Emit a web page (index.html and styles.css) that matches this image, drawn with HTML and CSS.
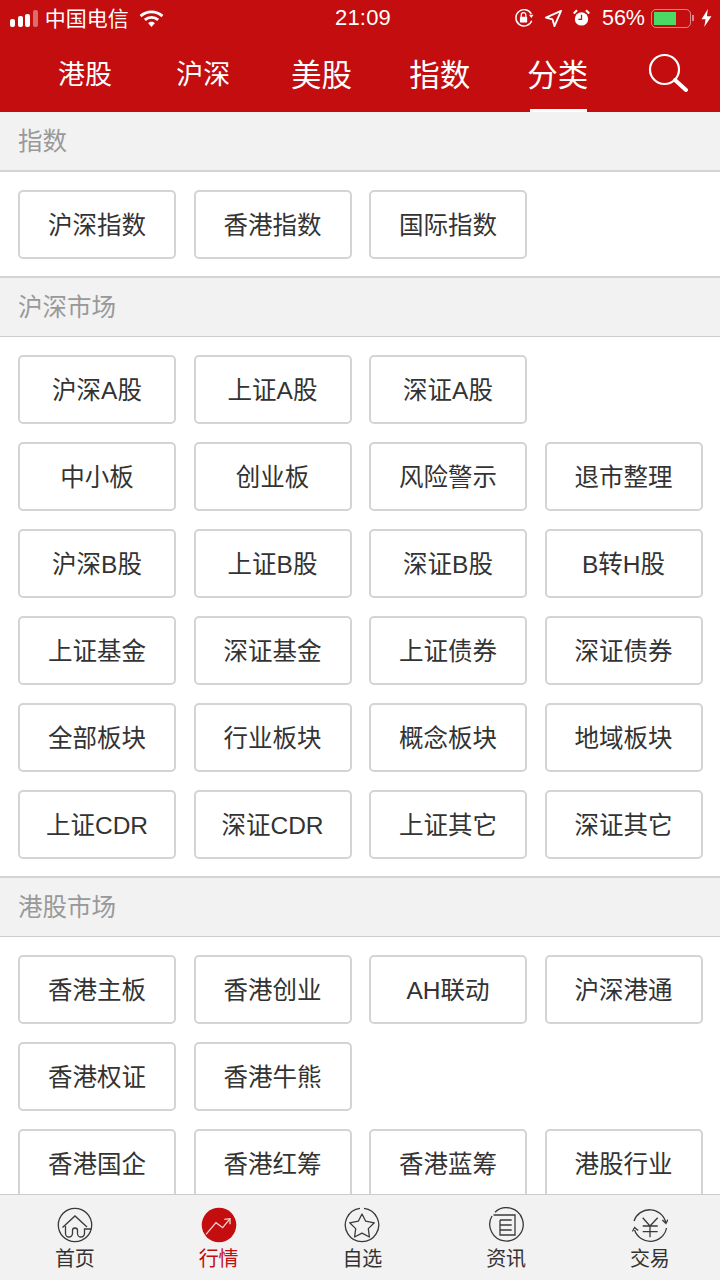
FILE: index.html
```html
<!DOCTYPE html>
<html lang="zh-CN">
<head>
    <meta charset="UTF-8">
    <meta name="viewport" content="width=device-width, initial-scale=1.0">
    <title>行情</title>
    <link rel="stylesheet" href="styles.css">
</head>
<body>
    <header class="top">
        <div class="status">
            <div class="status-left">
                <span class="signal"><i></i><i></i><i></i><i class="off"></i></span>
                <span class="carrier">中国电信</span>
                <svg class="wifi" width="25" height="19" viewBox="0 0 26 20">
                    <path d="M1.5 7.5C8 1.5 18 1.5 24.5 7.5" fill="none" stroke="#fff" stroke-width="3"/>
                    <path d="M6 11.5C10 8 16 8 20 11.5" fill="none" stroke="#fff" stroke-width="3"/>
                    <path d="M9.5 15C11.5 13 14.5 13 16.5 15L13 19Z" fill="#fff"/>
                </svg>
            </div>
            <div class="time">21:09</div>
            <div class="status-right">
                <svg width="20" height="20" viewBox="0 0 22 22">
                    <path d="M19 6.5A9 9 0 1 0 19.5 14" fill="none" stroke="#fff" stroke-width="1.6"/>
                    <path d="M16.5 7.5L21.5 7.5L19 11Z" fill="#fff"/>
                    <rect x="6.5" y="9.5" width="8" height="6.5" rx="1" fill="#fff"/>
                    <path d="M8 10V7.5a2.5 2.5 0 0 1 5 0V10" fill="none" stroke="#fff" stroke-width="1.4"/>
                </svg>
                <svg class="gap-loc" width="17" height="17" viewBox="0 0 18 18">
                    <path d="M17 1L1 8L8 10L10 17Z" fill="none" stroke="#fff" stroke-width="2" stroke-linejoin="round"/>
                </svg>
                <svg class="gap-alarm" width="17" height="18" viewBox="0 0 19 20">
                    <circle cx="9.5" cy="11" r="7.5" fill="#fff"/>
                    <path d="M9.5 6.5V11.5H6" fill="none" stroke="#c30d0f" stroke-width="1.4"/>
                    <path d="M0.8 5L4.5 1.2M18.2 5L14.5 1.2" stroke="#fff" stroke-width="2.4"/>
                </svg>
                <span class="percent">56%</span>
                <span class="battery"><i></i></span>
                <span class="battery-tip"></span>
                <svg class="bolt" width="11" height="18" viewBox="0 0 12 20">
                    <path d="M7.5 0L0.5 11.5H5L3.5 20L11.5 8H6.5Z" fill="#fff"/>
                </svg>
            </div>
        </div>
        <nav class="tabs">
            <a class="tab">港股</a>
            <a class="tab">沪深</a>
            <a class="tab large">美股</a>
            <a class="tab large">指数</a>
            <a class="tab large active">分类</a>
            <svg class="search" width="40" height="40" viewBox="0 0 40 40">
                <circle cx="16.5" cy="16.5" r="14.5" fill="none" stroke="#fff" stroke-width="2.2"/>
                <path d="M27 27L38 37" stroke="#fff" stroke-width="4" stroke-linecap="round"/>
            </svg>
        </nav>
    </header>

    <main class="content">
        <section>
            <h2>指数</h2>
            <div class="grid">
                <a class="item">沪深指数</a>
                <a class="item">香港指数</a>
                <a class="item">国际指数</a>
            </div>
        </section>
        <section>
            <h2>沪深市场</h2>
            <div class="grid">
                <a class="item">沪深A股</a>
                <a class="item">上证A股</a>
                <a class="item">深证A股</a>
                <span></span>
                <a class="item">中小板</a>
                <a class="item">创业板</a>
                <a class="item">风险警示</a>
                <a class="item">退市整理</a>
                <a class="item">沪深B股</a>
                <a class="item">上证B股</a>
                <a class="item">深证B股</a>
                <a class="item">B转H股</a>
                <a class="item">上证基金</a>
                <a class="item">深证基金</a>
                <a class="item">上证债券</a>
                <a class="item">深证债券</a>
                <a class="item">全部板块</a>
                <a class="item">行业板块</a>
                <a class="item">概念板块</a>
                <a class="item">地域板块</a>
                <a class="item">上证CDR</a>
                <a class="item">深证CDR</a>
                <a class="item">上证其它</a>
                <a class="item">深证其它</a>
            </div>
        </section>
        <section>
            <h2>港股市场</h2>
            <div class="grid">
                <a class="item">香港主板</a>
                <a class="item">香港创业</a>
                <a class="item">AH联动</a>
                <a class="item">沪深港通</a>
                <a class="item">香港权证</a>
                <a class="item">香港牛熊</a>
                <span></span>
                <span></span>
                <a class="item">香港国企</a>
                <a class="item">香港红筹</a>
                <a class="item">香港蓝筹</a>
                <a class="item">港股行业</a>
            </div>
        </section>
    </main>

    <footer class="bottom">
        <a class="bottom-item">
            <svg width="36" height="36" viewBox="0 0 36 36" fill="none" stroke="#3a3a3a" stroke-width="1.3">
                <circle cx="18" cy="18" r="16.7"/>
                <path d="M5.5 20.5L18 9L30 20"/>
                <path d="M8.5 19V26.5a3.5 3.5 0 0 0 7 0V23.5a2.5 2.5 0 0 1 5 0V26.5a3.5 3.5 0 0 0 7 0V22H34.5"/>
            </svg>
            <span>首页</span>
        </a>
        <a class="bottom-item active">
            <svg width="36" height="36" viewBox="0 0 36 36">
                <circle cx="18" cy="18" r="17.3" fill="#c30d0f"/>
                <path d="M5 27.3L15 15.7L21.7 20.7L29 11.7" fill="none" stroke="#f6d5d5" stroke-width="1.3"/>
                <path d="M23.3 12.3L29 11.7V17.3" fill="none" stroke="#f6d5d5" stroke-width="1.3"/>
            </svg>
            <span>行情</span>
        </a>
        <a class="bottom-item">
            <svg width="36" height="36" viewBox="0 0 36 36" fill="none" stroke="#3a3a3a" stroke-width="1.3">
                <path d="M20 1.4A16.7 16.7 0 1 1 16 1.4"/>
                <path d="M18 7L21.7 14.2L30.3 15.8L24.3 21.6L25.4 30L18 26.2L10.6 30L11.7 21.6L5.7 15.8L14.3 14.2Z" stroke-linejoin="round"/>
            </svg>
            <span>自选</span>
        </a>
        <a class="bottom-item">
            <svg width="36" height="36" viewBox="0 0 36 36" fill="none" stroke="#3a3a3a" stroke-width="1.3">
                <path d="M7 5.2A16.7 16.7 0 1 1 4 9"/>
                <path d="M5.5 8H27V28H12V13"/>
                <path d="M12 13H23.7M12 18H23.7M12 23H23.7"/>
            </svg>
            <span>资讯</span>
        </a>
        <a class="bottom-item">
            <svg width="36" height="36" viewBox="0 0 36 36" fill="none" stroke="#3a3a3a" stroke-width="1.3">
                <path d="M2 14A16.5 16.5 0 0 1 33.7 15.5M34.5 21A16.5 16.5 0 0 1 2.6 23"/>
                <path d="M30.3 13L33.9 16.5L36 12.5M0.4 24.5L2.6 20.5L6.2 23.5"/>
                <path d="M10.7 10.7L18 19L25.7 10.7M10.7 19H25.7M10.7 24.7H25.7M18 19V30.3"/>
            </svg>
            <span>交易</span>
        </a>
    </footer>
</body>
</html>
```

FILE: styles.css
```css
html, body {
    margin: 0;
    padding: 0;
}

body {
    width: 720px;
    height: 1280px;
    display: flex;
    flex-direction: column;
    overflow: hidden;
    background-color: #fff;
    font-family: "Liberation Sans", "Noto Sans CJK SC", sans-serif;
    color: #333;
}

.top {
    height: 112px;
    flex-shrink: 0;
    background-color: #c30d0f;
    color: #fff;
}

.status {
    height: 36px;
    padding: 0 8px 0 10px;
    display: flex;
    align-items: center;
    justify-content: space-between;
    position: relative;
}

.status-left, .status-right {
    display: flex;
    align-items: center;
}

.signal {
    display: flex;
    align-items: flex-end;
    gap: 2.6px;
    margin-right: 7px;
}

.signal i {
    width: 5px;
    background-color: #fff;
    border-radius: 2px;
}

.signal i:nth-child(1) { height: 8px; }
.signal i:nth-child(2) { height: 11px; }
.signal i:nth-child(3) { height: 13px; }
.signal i:nth-child(4) { height: 17px; }
.signal .off { background-color: rgba(255,255,255,0.4); }

.carrier {
    font-size: 21px;
    margin: 0 10px 2px 0;
}

.time {
    position: absolute;
    left: 335px;
    font-size: 22px;
    letter-spacing: 0.2px;
}

.status-right .gap-loc { margin-left: 11px; }
.status-right .gap-alarm { margin-left: 11px; }

.percent {
    font-size: 21.5px;
    margin: 0 6px 0 12px;
}

.battery {
    width: 40px;
    height: 19px;
    box-sizing: border-box;
    padding: 2px;
    border: 1px solid rgba(255,255,255,0.5);
    border-radius: 5px;
    display: block;
}

.battery i {
    display: block;
    width: 22px;
    height: 100%;
    background-color: #4cd964;
}

.battery-tip {
    width: 2px;
    height: 6px;
    margin-left: 1px;
    background-color: rgba(255,255,255,0.5);
}

.bolt {
    margin-left: 7px;
}

.tabs {
    height: 76px;
    padding-left: 26px;
    display: flex;
    position: relative;
}

.tab {
    width: 118.2px;
    height: 76px;
    line-height: 78px;
    text-align: center;
    font-size: 27px;
    position: relative;
}

.tab.large {
    font-size: 30.5px;
}

.tab.active::after {
    content: "";
    position: absolute;
    left: 31px;
    bottom: 0;
    width: 57px;
    height: 3px;
    background-color: #fff;
}

.search {
    position: absolute;
    left: 648px;
    top: 17px;
}

.content {
    flex: 1;
    overflow: hidden;
}

h2 {
    margin: 0;
    height: 61px;
    box-sizing: border-box;
    padding-left: 18px;
    line-height: 60px;
    font-size: 24.5px;
    font-weight: normal;
    color: #999;
    background-color: #f2f2f2;
    border-top: 2px solid #d4d4d4;
    border-bottom: 1px solid #ccc;
}

section:first-child h2 {
    height: 60px;
    line-height: 60px;
    border-top: none;
    border-bottom: 2px solid #d4d4d4;
}

.grid {
    display: grid;
    grid-template-columns: repeat(4, 158px);
    column-gap: 17.5px;
    row-gap: 18px;
    padding: 18px 18px 17px;
}

.item {
    height: 69px;
    box-sizing: border-box;
    line-height: 68px;
    text-align: center;
    font-size: 24.5px;
    color: #333;
    background-color: #fff;
    border: 2px solid #d4d4d4;
    border-radius: 5px;
}

.bottom {
    height: 86px;
    flex-shrink: 0;
    box-sizing: border-box;
    display: flex;
    padding: 12px 0 0 3px;
    background-color: #f2f2f2;
    border-top: 1px solid #ccc;
}

.bottom-item {
    flex: 0 0 143.75px;
    display: flex;
    flex-direction: column;
    align-items: center;
    font-size: 20px;
    color: #333;
}

.bottom-item span {
    margin-top: 1px;
    line-height: 30px;
}

.bottom-item.active {
    color: #c30d0f;
}
```
